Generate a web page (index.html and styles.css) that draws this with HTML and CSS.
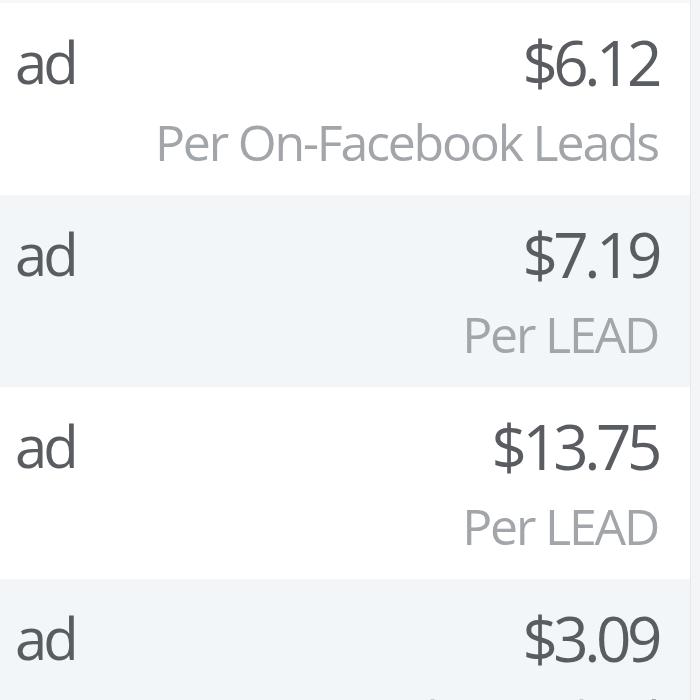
FILE: index.html
```html
<!DOCTYPE html>
<html>
<head>
<meta charset="utf-8">
<link rel="stylesheet" href="styles.css">
</head>
<body>
<div class="page">
  <div class="table">
    <div class="row row-prev"></div>
    <div class="row">
      <div class="name">ad</div>
      <div class="cost"><div class="value">$6.12</div><div class="unit">Per On-Facebook Leads</div></div>
    </div>
    <div class="row alt">
      <div class="name">ad</div>
      <div class="cost"><div class="value">$7.19</div><div class="unit">Per LEAD</div></div>
    </div>
    <div class="row">
      <div class="name">ad</div>
      <div class="cost"><div class="value">$13.75</div><div class="unit">Per LEAD</div></div>
    </div>
    <div class="row alt">
      <div class="name">ad</div>
      <div class="cost"><div class="value">$3.09</div><div class="unit">Per 1,000 People Reached</div></div>
    </div>
  </div>
</div>
</body>
</html>
```
FILE: styles.css
```css
html, body {
  margin: 0;
  padding: 0;
  background: #f4f5f6;
  overflow: hidden;
}
.page {
  width: 700px;
  height: 700px;
  overflow: hidden;
  font-family: "Open Sans", "Noto Sans", sans-serif;
}
.table {
  width: 690px;
  background: #ffffff;
  border-right: 1px solid #e6e8ea;
  filter: blur(0.6px);
}
.row {
  height: 192px;
  display: flex;
  justify-content: space-between;
  align-items: flex-start;
  padding: 28px 32px 0 15px;
  box-sizing: border-box;
}
.row-prev {
  height: 3px;
  padding: 0;
  background: #f5f8fa;
}
.alt {
  background: #f3f6f9;
}
.name {
  font-size: 58px;
  line-height: 62px;
  color: #595c60;
  letter-spacing: -4px;
}
.cost {
  text-align: right;
}
.value {
  font-size: 62px;
  line-height: 62px;
  color: #595c60;
  letter-spacing: -4.5px;
}
.unit {
  margin-top: 23px;
  font-size: 50px;
  line-height: 52px;
  color: #a2a5a9;
  letter-spacing: -2.2px;
  white-space: nowrap;
}
```
